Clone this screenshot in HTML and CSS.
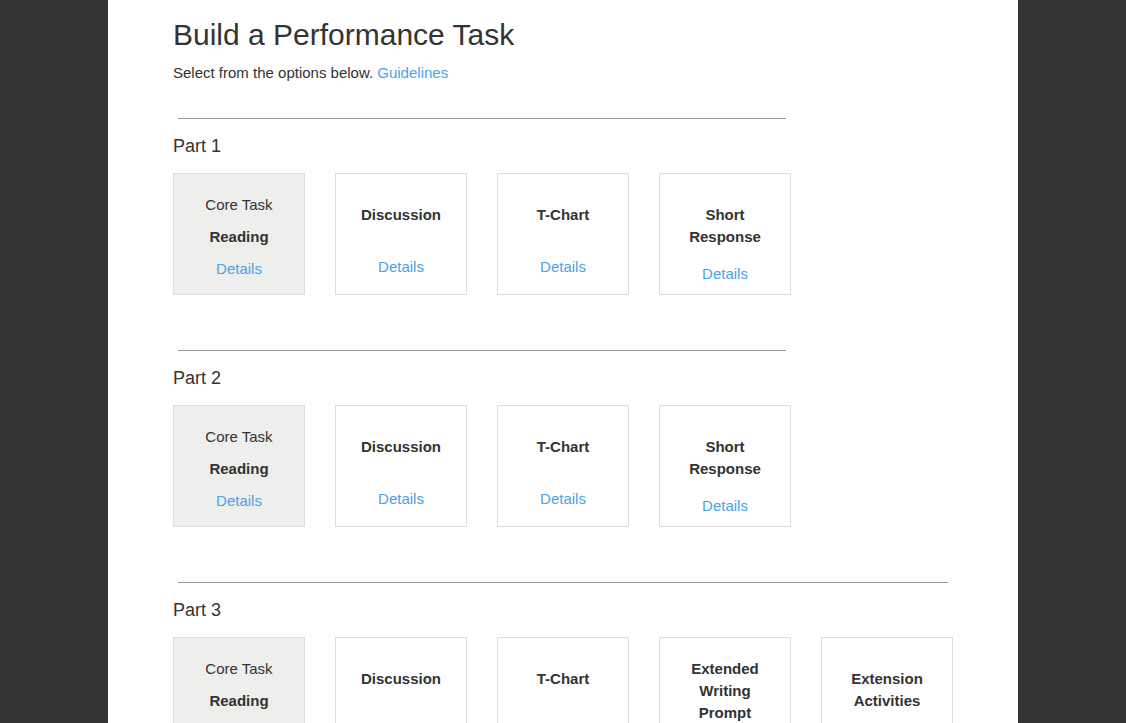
FILE: index.html
```html
<!DOCTYPE html>
<html>
<head>
<meta charset="utf-8">
<link rel="stylesheet" href="styles.css">
</head>
<body>
<div class="page">
  <h1 class="title">Build a Performance Task</h1>
  <p class="intro">Select from the options below. <a class="link" href="#">Guidelines</a></p>

  <section class="part">
    <hr class="rule">
    <h2 class="part-label">Part 1</h2>
    <div class="cards">
      <div class="card card--core"><div class="card-label">Core Task</div><div class="card-title">Reading</div><a class="card-link card-link--core" href="#">Details</a></div>
      <div class="card"><div class="card-title card-title--offset">Discussion</div><a class="card-link card-link--far" href="#">Details</a></div>
      <div class="card"><div class="card-title card-title--offset">T-Chart</div><a class="card-link card-link--far" href="#">Details</a></div>
      <div class="card"><div class="card-title card-title--offset">Short<br>Response</div><a class="card-link" href="#">Details</a></div>
    </div>
  </section>

  <section class="part">
    <hr class="rule">
    <h2 class="part-label">Part 2</h2>
    <div class="cards">
      <div class="card card--core"><div class="card-label">Core Task</div><div class="card-title">Reading</div><a class="card-link card-link--core" href="#">Details</a></div>
      <div class="card"><div class="card-title card-title--offset">Discussion</div><a class="card-link card-link--far" href="#">Details</a></div>
      <div class="card"><div class="card-title card-title--offset">T-Chart</div><a class="card-link card-link--far" href="#">Details</a></div>
      <div class="card"><div class="card-title card-title--offset">Short<br>Response</div><a class="card-link" href="#">Details</a></div>
    </div>
  </section>

  <section class="part">
    <hr class="rule">
    <h2 class="part-label">Part 3</h2>
    <div class="cards">
      <div class="card card--core"><div class="card-label">Core Task</div><div class="card-title">Reading</div><a class="card-link card-link--core" href="#">Details</a></div>
      <div class="card"><div class="card-title card-title--offset">Discussion</div><a class="card-link card-link--far" href="#">Details</a></div>
      <div class="card"><div class="card-title card-title--offset">T-Chart</div><a class="card-link card-link--far" href="#">Details</a></div>
      <div class="card"><div class="card-title">Extended<br>Writing<br>Prompt</div><a class="card-link" href="#">Details</a></div>
      <div class="card"><div class="card-title card-title--offset">Extension<br>Activities</div><a class="card-link" href="#">Details</a></div>
    </div>
  </section>
</div>
</body>
</html>
```

FILE: styles.css
```css
html, body {
  margin: 0;
  padding: 0;
  background: #333333;
  height: 100%;
}
body {
  font-family: "Liberation Sans", Arial, Helvetica, sans-serif;
  color: #333333;
}
.page {
  width: 910px;
  margin: 0 auto;
  background: #ffffff;
  min-height: 100%;
  box-sizing: border-box;
  padding: 17px 65px 40px;
}
.title {
  margin: 0;
  font-size: 30px;
  line-height: 36px;
  font-weight: 400;
  color: #333;
}
.intro {
  margin: 10px 0 0;
  font-size: 15px;
  line-height: 20px;
}
.link {
  color: #4aa3ea;
  text-decoration: none;
}
.part {
  width: fit-content;
  margin-top: 35px;
}
.part + .part {
  margin-top: 55px;
}
.rule {
  margin: 0 5px;
  border: 0;
  border-top: 1px solid #999999;
  height: 0;
}
.part-label {
  margin: 16px 0 0;
  font-size: 18px;
  line-height: 22px;
  font-weight: 400;
}
.cards {
  display: flex;
  gap: 30px;
  margin-top: 16px;
}
.card {
  width: 132px;
  height: 122px;
  box-sizing: border-box;
  border: 1px solid #dddddd;
  background: #ffffff;
  padding-top: 20px;
  display: flex;
  flex-direction: column;
  align-items: center;
  text-align: center;
  font-size: 15px;
  line-height: 22px;
}
.card--core {
  background: #eeeeec;
}
.card-label {
  margin-bottom: 10px;
}
.card-title {
  font-weight: 700;
}
.card-title--offset {
  margin-top: 10px;
}
.card-link {
  color: #4aa3ea;
  text-decoration: none;
  margin-top: 15px;
}
.card-link--core {
  margin-top: 10px;
}
.card-link--far {
  margin-top: 30px;
}
```
